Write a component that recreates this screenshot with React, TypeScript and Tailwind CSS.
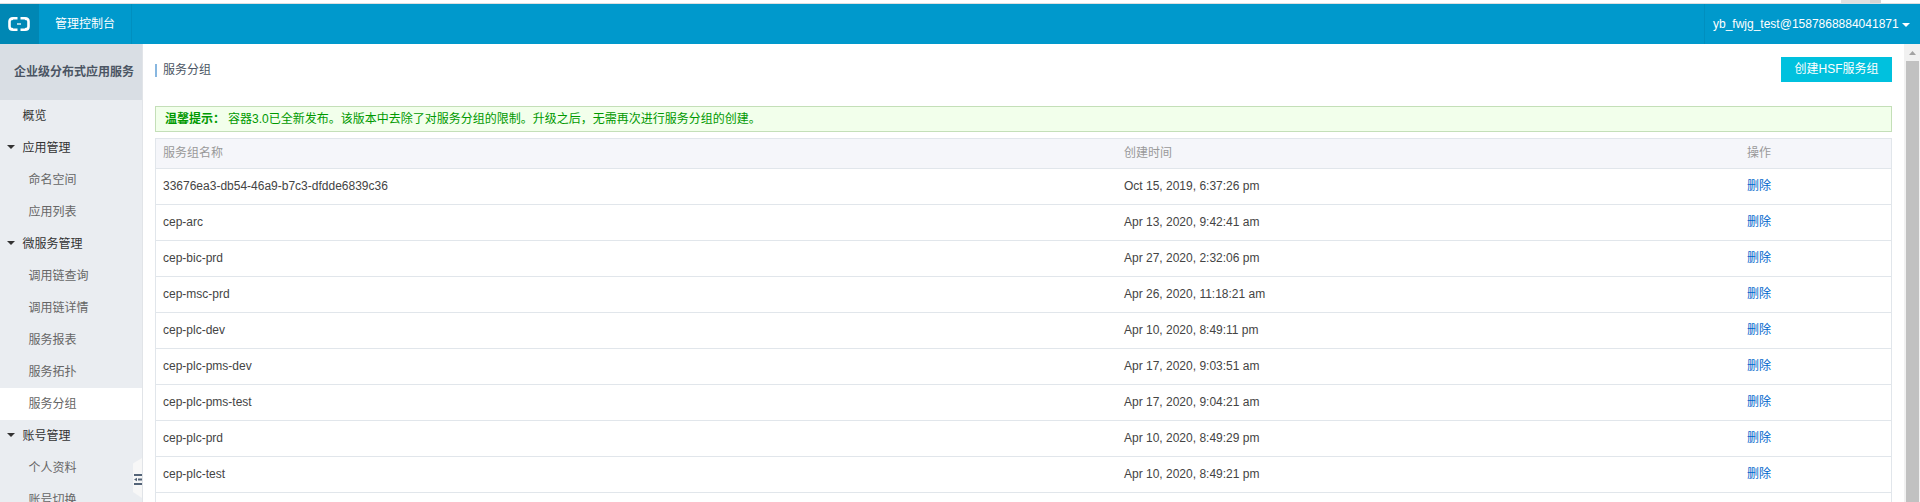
const FONT = "font-['Liberation_Sans','Noto_Sans_CJK_SC',sans-serif]";

type NavItem = { label: string; kind: 'top' | 'group' | 'child'; active?: boolean };

const NAV: NavItem[] = [
  { label: '概览', kind: 'top' },
  { label: '应用管理', kind: 'group' },
  { label: '命名空间', kind: 'child' },
  { label: '应用列表', kind: 'child' },
  { label: '微服务管理', kind: 'group' },
  { label: '调用链查询', kind: 'child' },
  { label: '调用链详情', kind: 'child' },
  { label: '服务报表', kind: 'child' },
  { label: '服务拓扑', kind: 'child' },
  { label: '服务分组', kind: 'child', active: true },
  { label: '账号管理', kind: 'group' },
  { label: '个人资料', kind: 'child' },
  { label: '账号切换', kind: 'child' },
];

const ROWS: [string, string][] = [
  ['33676ea3-db54-46a9-b7c3-dfdde6839c36', 'Oct 15, 2019, 6:37:26 pm'],
  ['cep-arc', 'Apr 13, 2020, 9:42:41 am'],
  ['cep-bic-prd', 'Apr 27, 2020, 2:32:06 pm'],
  ['cep-msc-prd', 'Apr 26, 2020, 11:18:21 am'],
  ['cep-plc-dev', 'Apr 10, 2020, 8:49:11 pm'],
  ['cep-plc-pms-dev', 'Apr 17, 2020, 9:03:51 am'],
  ['cep-plc-pms-test', 'Apr 17, 2020, 9:04:21 am'],
  ['cep-plc-prd', 'Apr 10, 2020, 8:49:29 pm'],
  ['cep-plc-test', 'Apr 10, 2020, 8:49:21 pm'],
];

const COLS = 'grid grid-cols-[961px_623px_1fr] pl-[7px]';

function Header() {
  return (
    <header className="flex h-10 shrink-0 items-stretch bg-[#0099cc] text-white">
      <div className="flex w-[39px] items-center bg-[#0087b4] pl-2">
        <svg width="22" height="14" viewBox="0 0 22 14" fill="none" stroke="#fff">
          <path d="M9.5 1.3H5Q1.5 1.3 1.5 4.5V9.5Q1.5 12.7 5 12.7H9.5M12.5 1.3H17Q20.5 1.3 20.5 4.5V9.5Q20.5 12.7 17 12.7H12.5" strokeWidth="2.6" />
          <path d="M2 2.5L5 2M2 11.5L5 12M20 2.5L17 2M20 11.5L17 12" strokeWidth="2" />
          <path d="M9 7H13" strokeWidth="1.3" />
        </svg>
      </div>
      <div className="flex w-[93px] items-center border-r border-[#008fbf] pl-4 pb-px">管理控制台</div>
      <div className="ml-auto flex w-[216px] items-center border-l border-[#008fbf] pl-2">
        <span className="w-[186px] whitespace-nowrap">yb_fwjg_test@1587868884041871</span>
        <svg className="ml-[3px] mt-px" width="8" height="4" viewBox="0 0 8 4"><path d="M0 0H8L4 4Z" fill="#fff" /></svg>
      </div>
    </header>
  );
}

function Sidebar() {
  return (
    <aside className="relative w-[143px] shrink-0 overflow-hidden border-r border-[#e1e4e8] bg-[#eaedf1]">
      <div className="flex h-14 items-center whitespace-nowrap bg-[#d9dee4] pl-[14px] font-bold text-[#4b5563]">企业级分布式应用服务</div>
      <nav>
        {NAV.map((n) => (
          <div key={n.label} className={`flex h-8 items-center ${n.active ? 'bg-white' : ''} ${n.kind === 'child' ? 'pl-[28.5px] text-[#666]' : n.kind === 'top' ? 'pl-[22.5px] text-[#333]' : 'pl-[6.5px] text-[#333]'}`}>
            {n.kind === 'group' && (
              <svg className="mr-2 -mt-[3px]" width="8" height="4" viewBox="0 0 8 4"><path d="M0 0H8L4 4Z" fill="#333" /></svg>
            )}
            {n.label}
          </div>
        ))}
      </nav>
      <svg className="absolute left-[133px] top-[414px]" width="9" height="40" viewBox="0 0 9 40">
        <path d="M0 5.5L9 0V40L0 34Z" fill="#f7f7f7" />
        <path d="M1 17H9M5 21.5H9M1 26H9" stroke="#546478" strokeWidth="2" />
        <path d="M1 21.5L4 19.7V23.3Z" fill="#546478" />
      </svg>
    </aside>
  );
}

export default function App() {
  return (
    <div className={`flex h-[502px] w-full flex-col overflow-hidden bg-white text-[12px] leading-[18px] ${FONT}`}>
      <div className="flex h-1 shrink-0 justify-end border-b border-[#dcdfe0] pr-[39px]">
        <div className="w-[29px] bg-[#e1e1e1]" />
        <div className="w-[11px] bg-[#d5d5d5]" />
      </div>
      <Header />
      <div className="flex min-h-0 flex-1">
        <Sidebar />
        <main className="min-w-0 flex-1 overflow-hidden pl-3 pr-3">
          <div className="flex h-[62px] items-start justify-between">
            <div className="flex items-center pt-[17px] text-[#4b5563]">
              <div className="mr-[6px] h-[13px] w-[2px] bg-[#88b7e0]" />
              <h1>服务分组</h1>
            </div>
            <button className="mt-[13px] h-[25px] w-[111px] bg-[#00c1de] pb-px text-white">创建HSF服务组</button>
          </div>
          <div className="flex h-[26px] items-center border border-[#c4dfb8] bg-[#f2ffeb] pl-[9px] pb-px text-[#090]">
            <b className="mr-[3px]">温馨提示：</b>
            <span>容器3.0已全新发布。该版本中去除了对服务分组的限制。升级之后，无需再次进行服务分组的创建。</span>
          </div>
          <div className="mt-[6px] border-x border-t border-[#e1e6eb]">
            <div className={`${COLS} h-[29px] items-center bg-[#f5f6fa] pb-px text-[#999]`}>
              <span>服务组名称</span>
              <span>创建时间</span>
              <span>操作</span>
            </div>
            {[...ROWS, null].map((r, i) => (
              <div key={i} className={`${COLS} h-9 items-center border-t border-[#e1e6eb] pb-px text-[#444]`}>
                {r && (
                  <>
                    <span>{r[0]}</span>
                    <span>{r[1]}</span>
                    <a className="text-[#06c]">删除</a>
                  </>
                )}
              </div>
            ))}
          </div>
        </main>
        <div className="flex w-4 shrink-0 flex-col items-center bg-[#f1f1f1]">
          <svg className="mb-[6px] mt-[7px] ml-px shrink-0" width="7" height="4" viewBox="0 0 7 4"><path d="M0 4H7L3.5 0Z" fill="#a3a3a3" /></svg>
          <div className="ml-px w-[13px] flex-1 bg-[#c1c1c1]" />
        </div>
      </div>
    </div>
  );
}
